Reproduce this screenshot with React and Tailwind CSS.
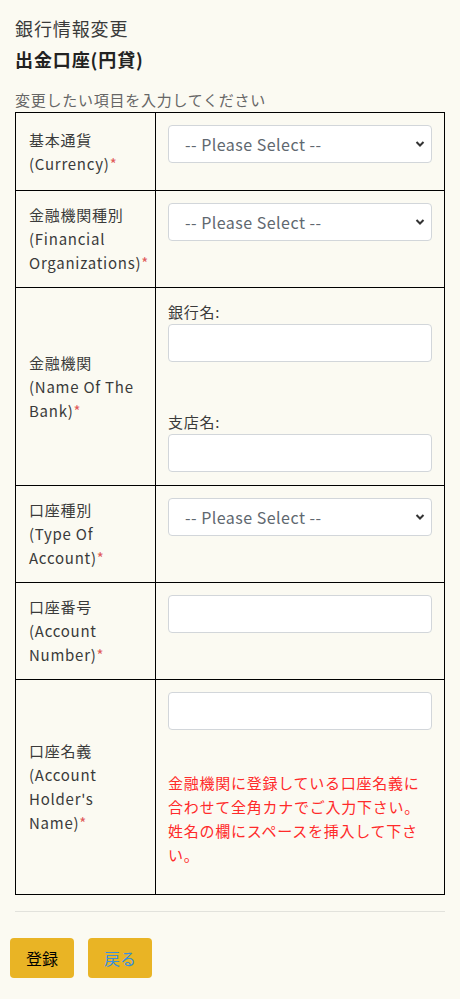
export default function App() {
  const font = { fontFamily: '"Noto Sans CJK JP", "Noto Sans", sans-serif' }

  const Label = ({ jp, en }) => (
    <td className="w-[140px] border border-black px-[13px] py-3 align-middle text-[15px] leading-6 tracking-[0.05em] text-[#3a3a3a]">
      <div>{jp}</div>
      <div>
        {en}
        <span className="text-[#e05a5a]">*</span>
      </div>
    </td>
  )

  const Select = () => (
    <div className="relative mb-4">
      <select className="h-[38px] w-full appearance-none rounded-[4px] border border-[#d2d6da] bg-white pl-4 pr-8 text-[16px] tracking-[0.03em] text-[#606870]">
        <option>-- Please Select --</option>
      </select>
      <svg className="pointer-events-none absolute right-[7px] top-[15px]" width="10" height="8" viewBox="0 0 10 8">
        <path d="M1.5 2 L5 5.5 L8.5 2" fill="none" stroke="#333" strokeWidth="2" />
      </svg>
    </div>
  )

  const Input = ({ className = 'mb-4' }) => (
    <input className={`block h-[38px] w-full rounded-[4px] border border-[#d2d6da] bg-white ${className}`} />
  )

  return (
    <div className="min-h-[999px] bg-[#fbfaf2] px-[15px] pt-[14px]" style={font}>
      <h2 className="text-[18px] leading-7 tracking-[0.05em] text-[#3a3a3a]">銀行情報変更</h2>
      <h3 className="mt-[3px] text-[18px] font-bold leading-7 tracking-[0.05em] text-[#222]">出金口座(円貸)</h3>
      <p className="mt-[17px] text-[15px] leading-5 tracking-[0.05em] text-[#666]">変更したい項目を入力してください</p>

      <table className="mt-[2px] w-[430px] table-fixed border-collapse border border-black">
        <colgroup>
          <col className="w-[140px]" />
          <col />
        </colgroup>
        <tbody>
          <tr className="h-[78px]">
            <Label jp="基本通貨" en="(Currency)" />
            <td className="border border-black px-3 pt-3 align-top">
              <Select />
            </td>
          </tr>
          <tr className="h-[97px]">
            <Label jp="金融機関種別" en="(Financial Organizations)" />
            <td className="border border-black px-3 pt-3 align-top">
              <Select />
            </td>
          </tr>
          <tr className="h-[198px]">
            <Label jp="金融機関" en="(Name Of The Bank)" />
            <td className="border border-black px-3 pt-3 align-top">
              <div className="text-[15px] leading-6 tracking-[0.05em] text-[#3a3a3a]">銀行名:</div>
              <Input className="mb-[48px]" />
              <div className="text-[15px] leading-6 tracking-[0.05em] text-[#3a3a3a]">支店名:</div>
              <Input className="mb-0" />
            </td>
          </tr>
          <tr className="h-[96px]">
            <Label jp="口座種別" en="(Type Of Account)" />
            <td className="border border-black px-3 pt-3 align-top">
              <Select />
            </td>
          </tr>
          <tr className="h-[97px]">
            <Label jp="口座番号" en="(Account Number)" />
            <td className="border border-black px-3 pt-3 align-top">
              <Input />
            </td>
          </tr>
          <tr className="h-[215px]">
            <Label jp="口座名義" en="(Account Holder's Name)" />
            <td className="border border-black px-3 pt-3 align-top">
              <Input className="mb-[41px]" />
              <p className="text-[15px] leading-6 tracking-[0.05em] text-[#ff2a2a]">
                金融機関に登録している口座名義に合わせて全角カナでご入力下さい。姓名の欄にスペースを挿入して下さい。
              </p>
            </td>
          </tr>
        </tbody>
      </table>

      <hr className="mt-4 w-[430px] border-t border-[#e2e2dc]" />

      <div className="-ml-[5px] mt-[26px] flex gap-[14px]">
        <button className="h-10 w-16 rounded-[4px] bg-[#e9b425] text-[16px] text-black">登録</button>
        <button className="h-10 w-16 rounded-[4px] bg-[#e9b425] text-[16px] text-[#3a8fdc]">戻る</button>
      </div>
    </div>
  )
}
